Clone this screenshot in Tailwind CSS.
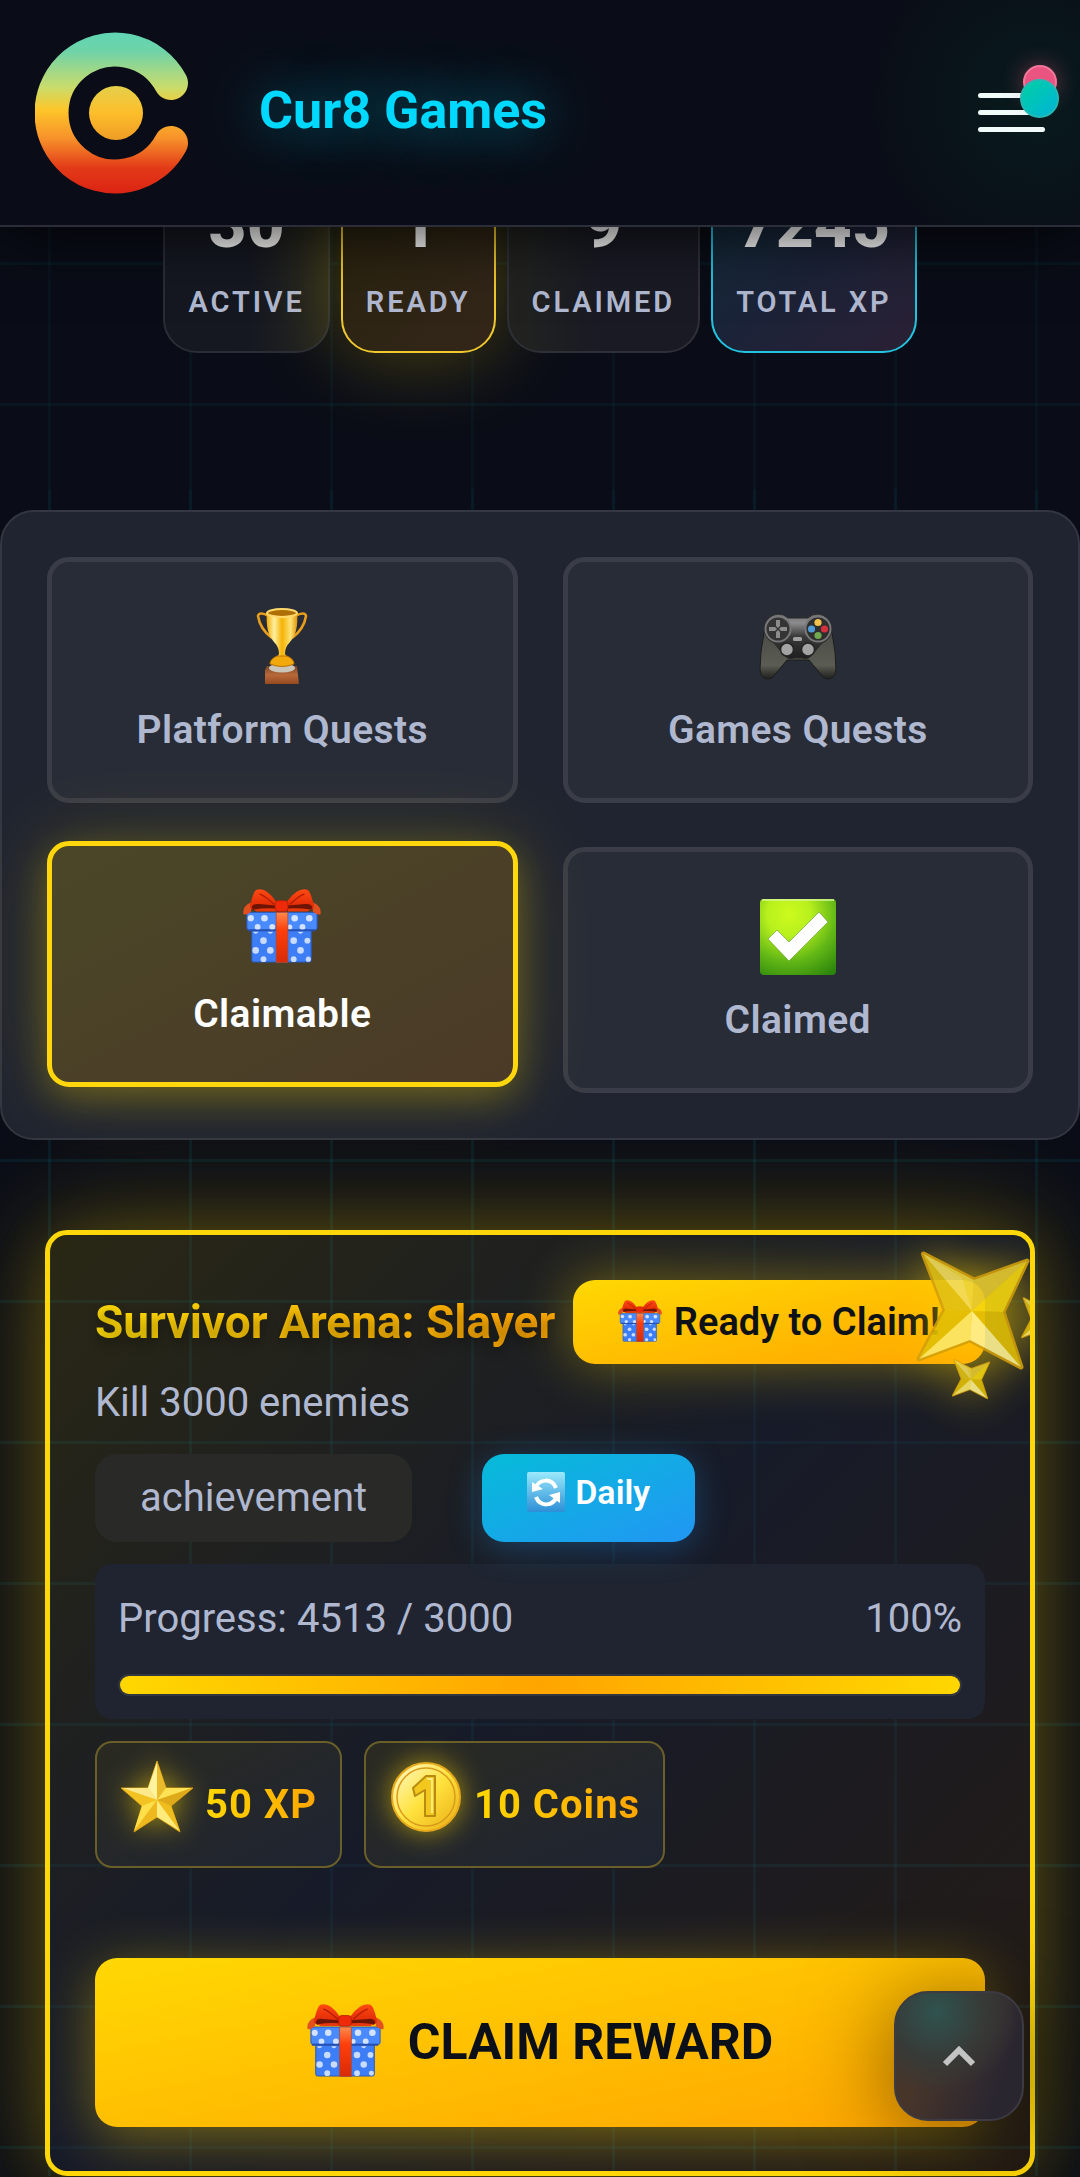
<!DOCTYPE html>
<html lang="en">

<head>
    <meta charset="UTF-8">
    <meta name="viewport" content="width=device-width, initial-scale=1.0">
    <title>Cur8 Games - Quests</title>
    <script src="https://cdn.jsdelivr.net/npm/@tailwindcss/browser@4"></script>
</head>

<body class="min-h-screen bg-[#0a0d17] text-[#b0b8d0] font-[Roboto,sans-serif]">

    <!-- shared icons -->
    <svg class="absolute w-0 h-0" aria-hidden="true">
        <defs>
            <linearGradient id="bow" x1="0" y1="0" x2="0" y2="1">
                <stop offset="0" stop-color="#ff4a12" />
                <stop offset="1" stop-color="#d92405" />
            </linearGradient>
            <linearGradient id="ribbon" x1="0" y1="0" x2="0" y2="1">
                <stop offset="0" stop-color="#ff8a4d" />
                <stop offset=".35" stop-color="#ff3f0c" />
                <stop offset="1" stop-color="#d82a06" />
            </linearGradient>
            <linearGradient id="goldLight" x1="0" y1="0" x2="1" y2="1">
                <stop offset="0" stop-color="#fffbd0" />
                <stop offset=".5" stop-color="#ffe23e" />
                <stop offset="1" stop-color="#e9ab12" />
            </linearGradient>
            <symbol id="gift" viewBox="0 0 80 76">
                <path d="M9 42h61v31q0 2-2 2H11q-2 0-2-2z" fill="#3d7df6" stroke="#2a57b8" />
                <g fill="#c9dbff">
                    <circle cx="21" cy="53" r="3.4" /><circle cx="13" cy="63" r="3.4" /><circle cx="28" cy="63" r="3.4" /><circle cx="21" cy="72" r="3" />
                    <circle cx="52" cy="53" r="3.4" /><circle cx="66" cy="53" r="3" /><circle cx="59" cy="63" r="3.4" /><circle cx="52" cy="72" r="3" /><circle cx="67" cy="72" r="2.6" />
                    <path d="M10 44h6q-3 4-6 0zM25 44h6q-3 4-6 0zM56 44h6q-3 4-6 0z" />
                </g>
                <path d="M4 24h72v16q0 2-2 2H6q-2 0-2-2z" fill="#4a8aff" stroke="#2a57b8" />
                <g fill="#d3e2ff">
                    <circle cx="8" cy="30" r="3.2" /><circle cx="22" cy="30" r="3.4" /><circle cx="15" cy="39" r="3" /><circle cx="30" cy="39" r="3" />
                    <circle cx="53" cy="30" r="3.4" /><circle cx="68" cy="30" r="3.4" /><circle cx="61" cy="39" r="3" /><circle cx="48" cy="39" r="2.6" />
                </g>
                <path d="M5 42.500h69" stroke="#2550b0" stroke-width="2" />
                <rect x="34" y="24" width="12" height="51.500" fill="url(#ribbon)" stroke="#a84b3a" stroke-width=".8" />
                <path d="M8 14Q-1 18 .5 26q4 1 8-3zM72 14q9 4 7.500 12-4 1-8-3z" fill="#e2501f" />
                <path d="M34 22H14Q5 22 8 14Q11 2 14 .8Q24-2 34 13zM45 22h21q9 0 6-8Q69 2 66 .8 56-2 45 13z" fill="url(#bow)" />
                <path d="M9 19q1-4 7-3.500L33 17v5q-18 1-23-1zM71 19q-1-4-7-3.500L46 17v5q18 1 24-1z" fill="#6d1405" />
                <path d="M11 21q12-2 23-1v3H14zM69 21q-12-2-23-1v3h20z" fill="#e8380d" />
                <path d="M17 5q7 3 15 11M63 5q-7 3-15 11" stroke="#b51d05" stroke-width="1.500" fill="none" />
                <rect x="33" y="12" width="13" height="11" rx="3" fill="#ee2a0a" stroke="#b41d05" stroke-width=".8" />
            </symbol>
            <symbol id="sparkle" viewBox="-4 -2 118 124">
                <g stroke-linejoin="round">
                    <path d="M5.500 4 56 30 109 11 85 62 103 117 52 90 1 109 27 60z" fill="#edca09" stroke="#d3a00c" stroke-width="5" />
                    <path d="M5.500 4 56 30 54 61z" fill="#eed53a" />
                    <path d="M5.500 4 27 60 54 61z" fill="#e2c114" />
                    <path d="M5.500 4 44 28 54 61z" fill="#f1dc5c" />
                    <path d="M56 30 109 11 54 61z" fill="#e6ca30" />
                    <path d="M109 11 85 62 54 61z" fill="#f5d70f" />
                    <path d="M85 62 103 117 54 61z" fill="#e2c006" />
                    <path d="M27 60 1 109 54 61z" fill="#e2c006" />
                    <path d="M1 109 52 90 54 61z" fill="#fbe96a" />
                    <path d="M103 117 52 90 54 61z" fill="#fff291" />
                </g>
            </symbol>
        </defs>
    </svg>

    <header class="fixed inset-x-0 top-0 z-20 flex h-[227px] items-center border-b-2 border-[#2b2d39] bg-[#0a0d17] bg-[radial-gradient(circle_at_96%_45%,#081b1d_0,transparent_170px)] px-[35px] shadow-[0_8px_60px_rgba(0,0,0,0.75)]">
        <a href="#" aria-label="Cur8" class="shrink-0">
            <svg width="162" height="162" viewBox="0 0 162 162" fill="none">
                <defs>
                    <linearGradient id="logo" x1="81" y1="0" x2="81" y2="162" gradientUnits="userSpaceOnUse">
                        <stop offset="0" stop-color="#5fd6b4" />
                        <stop offset=".12" stop-color="#6fd3a8" />
                        <stop offset=".34" stop-color="#c9dc6c" />
                        <stop offset=".48" stop-color="#fdc62a" />
                        <stop offset=".66" stop-color="#f7902a" />
                        <stop offset=".84" stop-color="#e23a18" />
                        <stop offset="1" stop-color="#db2313" />
                    </linearGradient>
                    <linearGradient id="dot" x1="0" y1="0" x2="0" y2="1">
                        <stop offset="0" stop-color="#e5cf4b" />
                        <stop offset=".5" stop-color="#fdbe2a" />
                        <stop offset="1" stop-color="#ee9c26" />
                    </linearGradient>
                </defs>
                <path d="M136 51A63.500 63.500 0 1 0 136 111" stroke="url(#logo)" stroke-width="34" stroke-linecap="round" />
                <circle cx="81" cy="81" r="27" fill="url(#dot)" />
            </svg>
        </a>
        <h1 class="mb-1 ml-[62px] text-[52px] font-bold text-[#00d9ff] [text-shadow:0_0_56px_rgba(0,217,255,0.6)]">Cur8 Games</h1>
        <button type="button" aria-label="Menu" class="relative ml-auto flex h-[68px] w-[67px] flex-col items-center justify-center gap-3">
            <span class="h-[5px] w-full rounded-full bg-[#f0fbfa]"></span>
            <span class="h-[5px] w-full rounded-full bg-[#f0fbfa]"></span>
            <span class="h-[5px] w-full rounded-full bg-[#f0fbfa]"></span>
            <span class="absolute -top-[14px] -right-[12px] size-[34px] rounded-full border-2 border-[#f0789a] bg-[#ea5480] shadow-[0_0_22px_rgba(234,84,128,0.45)]"></span>
            <span class="absolute top-0 -right-[14px] size-[39px] rounded-full border-2 border-[#25b9b6] bg-linear-to-br from-[#05d0a0] to-[#06b2d8]"></span>
        </button>
    </header>

    <main>
        <!-- stats -->
        <section class="h-[489px] bg-[linear-gradient(rgba(0,200,210,0.05)_3px,transparent_3px),linear-gradient(90deg,rgba(0,200,210,0.04)_3px,transparent_3px)] bg-[size:141px_141px] bg-[position:48px_121px] pt-[166px]">
            <div class="flex justify-center gap-[11px] text-center">
                <div class="rounded-[34px] border-2 border-[#2a2c36] bg-linear-to-r from-[#151821] from-50% to-[#22231f] px-[23px] pt-[22px] pb-[26px]">
                    <div class="mb-5 text-[66px] leading-[70px] font-extrabold text-white">30</div>
                    <div class="text-[29px] leading-[45px] font-semibold tracking-widest uppercase">Active</div>
                </div>
                <div class="rounded-[34px] border-2 border-[#f0c92e] bg-linear-to-br from-[#29230d] to-[#33261a] px-[23px] pt-[22px] pb-[26px] shadow-[0_0_84px_rgba(255,215,0,0.3)]">
                    <div class="mb-5 text-[66px] leading-[70px] font-extrabold text-white">1</div>
                    <div class="text-[29px] leading-[45px] font-semibold tracking-widest uppercase">Ready</div>
                </div>
                <div class="rounded-[34px] border-2 border-[#2f3037] bg-linear-to-r from-[#22231f] to-[#191a24] to-50% px-[23px] pt-[22px] pb-[26px]">
                    <div class="mb-5 text-[66px] leading-[70px] font-extrabold text-white">9</div>
                    <div class="text-[29px] leading-[45px] font-semibold tracking-widest uppercase">Claimed</div>
                </div>
                <div class="rounded-[34px] border-2 border-[#22c4e0] bg-linear-to-br from-[#0d2d3b] via-[#1b2338] to-[#2a2035] px-[23px] pt-[22px] pb-[26px]">
                    <div class="mb-5 text-[66px] leading-[70px] font-extrabold text-white">7245</div>
                    <div class="text-[29px] leading-[45px] font-semibold tracking-widest uppercase">Total XP</div>
                </div>
            </div>
        </section>

        <section class="bg-[linear-gradient(rgba(0,190,220,0.08)_3px,transparent_3px),linear-gradient(90deg,rgba(0,190,220,0.08)_3px,transparent_3px)] bg-[size:141px_141px] bg-[position:48px_106px] pt-[21px]">

            <!-- tabs -->
            <nav class="relative z-10 grid grid-cols-2 gap-x-[45px] gap-y-[44px] rounded-[34px] border-2 border-[#343741] bg-[#1f2430] p-[45px] text-[39px] leading-[52px] font-semibold tracking-[0.01em]">
                <button type="button" class="flex flex-col items-center gap-[18px] rounded-[22px] border-5 border-[#3a3d47] bg-[#272c37] pt-[46px] pb-[42px]">
                    <svg width="78" height="78" viewBox="0 0 78 78">
                        <defs>
                            <linearGradient id="cup" x1="0" y1="0" x2="1" y2="0">
                                <stop offset="0" stop-color="#f3ae05" />
                                <stop offset=".25" stop-color="#fff0a0" />
                                <stop offset=".5" stop-color="#f5b306" />
                                <stop offset=".78" stop-color="#ffe274" />
                                <stop offset="1" stop-color="#e39407" />
                            </linearGradient>
                            <linearGradient id="base" x1="0" y1="0" x2="0" y2="1">
                                <stop offset="0" stop-color="#7a4526" />
                                <stop offset=".5" stop-color="#b8693a" />
                                <stop offset="1" stop-color="#94491f" />
                            </linearGradient>
                        </defs>
                        <path d="M24 58h30l2 18H22V62z" fill="url(#base)" />
                        <ellipse cx="39" cy="60" rx="13" ry="4.500" fill="#c9c5b8" />
                        <path d="M26 8q-10-5-11 0 2 13 14 22M52 8q10-5 11 0-2 13-14 22" fill="none" stroke="#e99d1c" stroke-width="2.600" />
                        <path d="M24 4h30q2 20-7 30-5 5-5 12l2 3H34l2-3q0-7-5-12-9-10-7-30z" fill="url(#cup)" />
                        <path d="M34 48h10q7 3 7 8-12 5-24 0 0-5 7-8z" fill="#f2a90b" stroke="#b97205" />
                        <ellipse cx="39" cy="5" rx="15" ry="4" fill="#b06f05" stroke="#ffd96b" stroke-width="2" />
                    </svg>
                    <span>Platform Quests</span>
                </button>
                <button type="button" class="flex flex-col items-center gap-[18px] rounded-[22px] border-5 border-[#3a3d47] bg-[#272c37] pt-[46px] pb-[42px]">
                    <svg width="78" height="78" viewBox="0 1 78 78">
                        <defs>
                            <linearGradient id="pad" x1="0" y1="0" x2="0" y2="1">
                                <stop offset="0" stop-color="#6e6e6e" />
                                <stop offset=".2" stop-color="#8d8d8f" />
                                <stop offset=".5" stop-color="#3a3a3a" />
                                <stop offset="1" stop-color="#1e1e1e" />
                            </linearGradient>
                            <linearGradient id="grip" x1="0" y1="0" x2="0" y2="1">
                                <stop offset="0" stop-color="#4b4c46" />
                                <stop offset=".7" stop-color="#5b5c53" />
                                <stop offset="1" stop-color="#1f1f1d" />
                            </linearGradient>
                        </defs>
                        <path d="M5 26Q1 45 1 63q2 12 12 8l15-18h22l15 18q10 4 12-8 0-18-4-37z" fill="url(#grip)" stroke="#1c1c1a" />
                        <path d="M19 7q6 0 10 4h20q4-4 10-4a15 15 0 0 1 4 29L53 48q-4 5-10 3h-8q-6 2-10-3L15 36A15 15 0 0 1 19 7z" fill="url(#pad)" stroke="#2a2a2a" />
                        <circle cx="19" cy="22" r="12.500" fill="#343434" stroke="#77777a" stroke-width="2" />
                        <circle cx="59" cy="22" r="12.500" fill="#2e2e2e" stroke="#77777a" stroke-width="2" />
                        <path d="M17 13h4v6l-2 2-2-2zM17 31h4v-6l-2-2-2 2zM10 20h6l2 2-2 2h-6zM28 20h-6l-2 2 2 2h6z" fill="#8b8b8b" />
                        <circle cx="59" cy="15.500" r="3.600" fill="#f3bf4d" />
                        <circle cx="59" cy="28.500" r="3.600" fill="#6fa84f" />
                        <circle cx="52.500" cy="22" r="3.600" fill="#4f9bd8" />
                        <circle cx="65.500" cy="22" r="3.600" fill="#d5303e" />
                        <rect x="34" y="30" width="9" height="4" rx="1.500" fill="#a0a0a0" />
                        <circle cx="28" cy="42.500" r="6.500" fill="#a3a3a3" stroke="#242424" stroke-width="1.500" />
                        <circle cx="49" cy="42.500" r="6.500" fill="#a3a3a3" stroke="#242424" stroke-width="1.500" />
                    </svg>
                    <span>Games Quests</span>
                </button>
                <button type="button" class="flex -translate-y-[6px] flex-col items-center gap-[18px] rounded-[22px] border-5 border-[#ffd70c] bg-linear-to-br from-[#4a4727] to-[#4b3a27] pt-[46px] pb-[42px] text-white shadow-[0_0_84px_rgba(255,215,0,0.2),0_11px_34px_rgba(255,215,0,0.25)]">
                    <svg class="overflow-visible" width="78" height="78"><use href="#gift" y="-4" width="78" height="76" /></svg>
                    <span>Claimable</span>
                </button>
                <button type="button" class="flex flex-col items-center gap-[18px] rounded-[22px] border-5 border-[#3a3d47] bg-[#272c37] pt-[46px] pb-[42px]">
                    <svg width="78" height="78" viewBox="0 0 78 78">
                        <defs>
                            <radialGradient id="green" cx=".38" cy=".2" r=".95">
                                <stop offset="0" stop-color="#cdfb1e" />
                                <stop offset=".3" stop-color="#b8f01d" />
                                <stop offset=".65" stop-color="#63b816" />
                                <stop offset="1" stop-color="#2c850b" />
                            </radialGradient>
                        </defs>
                        <rect x="1" y="1" width="76" height="76" rx="4" fill="url(#green)" />
                        <path d="M3 2h72" stroke="#d8f79a" stroke-width="1.500" />
                        <path d="m9 41 9-9 12 12 30-30 9 10-39 39z" fill="#fff" stroke="#4a8a1a" stroke-opacity=".5" />
                    </svg>
                    <span>Claimed</span>
                </button>
            </nav>

            <!-- quest card -->
            <article class="relative mx-[45px] mt-[90px] rounded-[22px] border-5 border-[#ffd70a] bg-[linear-gradient(135deg,rgba(255,215,0,0.13),rgba(38,44,62,0.45)_48%,rgba(255,150,0,0.11))] px-[45px] pt-[45px] pb-11 shadow-[0_0_112px_rgba(255,215,0,0.32),0_0_56px_rgba(255,215,0,0.1)]">
                <div class="flex items-center justify-between">
                    <h2 class="bg-linear-to-r from-[#ffdc05] to-[#ffa500] bg-clip-text text-[46px] leading-[60px] font-bold whitespace-nowrap text-transparent [text-shadow:0_6px_11px_rgba(0,0,0,0.3)]">Survivor Arena: Slayer</h2>
                    <span class="flex h-[84px] items-center gap-3 rounded-[22px] bg-linear-to-br from-[#ffd803] to-[#ffa500] px-[45px] text-[38px] font-semibold whitespace-nowrap text-[#0e1116] shadow-[0_0_56px_rgba(255,215,0,0.4)]">
                        <svg width="44" height="44"><use href="#gift" width="44" height="42" /></svg>
                        Ready to Claim!
                    </span>
                </div>
                <p class="mt-[11px] text-[40px] leading-[56px]">Kill 3000 enemies</p>

                <div class="mt-[23px] flex gap-[70px]">
                    <span class="rounded-[22px] bg-[#292927] px-[45px] text-[40px] leading-[88px]">achievement</span>
                    <span class="flex h-[88px] items-center gap-[10px] rounded-[22px] bg-linear-to-br from-[#06bbd8] to-[#2196f3] px-[45px] pb-3 text-[34px] font-semibold text-white shadow-[0_6px_34px_rgba(33,150,243,0.3)]">
                        <svg width="38" height="40" viewBox="0 0 38 40" fill="none">
                            <defs>
                                <linearGradient id="sync" x1="0" y1="0" x2="0" y2="1">
                                    <stop offset="0" stop-color="#9be9fb" />
                                    <stop offset="1" stop-color="#2d8fd6" />
                                </linearGradient>
                            </defs>
                            <rect width="38" height="40" rx="2" fill="url(#sync)" />
                            <path d="M8 17C12 6 25 6 29 16" stroke="#fff" stroke-width="4" />
                            <path d="M30 24C26 35 13 35 9 25" stroke="#fff" stroke-width="4" />
                            <path d="M5 10v10l11-3zM33 20v11l-11-8z" fill="#fff" />
                        </svg>
                        Daily
                    </span>
                </div>

                <div class="mt-[22px] rounded-[17px] bg-[#1f2430] p-[23px]">
                    <div class="flex justify-between text-[40px] leading-[64px]">
                        <span>Progress: 4513 / 3000</span>
                        <span>100%</span>
                    </div>
                    <div role="progressbar" aria-label="Quest progress" aria-valuenow="100" class="mt-[23px] h-[22px] rounded-full border-2 border-[#33363f]">
                        <div class="h-full rounded-full bg-linear-to-r from-[#ffd700] via-[#ffa500] to-[#ffd700]" style="width: 100%"></div>
                    </div>
                </div>

                <div class="mt-[22px] flex gap-[22px] text-[40px] font-bold tracking-wide">
                    <div class="flex h-[127px] items-center gap-[11px] rounded-[17px] border-2 border-[#6a5f29] bg-linear-to-br from-[#2a2a21] to-[#1f2432] px-[23px]">
                        <svg class="-mt-4 drop-shadow-[0_0_14px_rgba(255,215,0,0.6)]" width="74" height="72" viewBox="0 0 74 72">
                            <path d="M37 0 46 27 73 27 51 45 60 71 37 56 14 71 22 45 1 27 28 27z" fill="#f4c521" stroke="#d29a12" />
                            <path d="M37 1v38L28 27z" fill="#fff3a0" />
                            <path d="M37 1v38l9-12z" fill="#e9bb2a" />
                            <path d="M2 27h26l9 12z" fill="#fbe98c" />
                            <path d="M2 27 22 45l15-6z" fill="#f2c323" />
                            <path d="M72 27H46l-9 12z" fill="#ffe256" />
                            <path d="M72 27 51 45l-14-6z" fill="#deaa1a" />
                            <path d="M14 70 37 39 22 45z" fill="#ffdf4a" />
                            <path d="M14 70 37 56V39z" fill="#edb91f" />
                            <path d="M60 70 37 56V39z" fill="#ffeb7c" />
                            <path d="M60 70 37 39l14 6z" fill="#f0bd1e" />
                        </svg>
                        <span class="bg-linear-to-r from-[#ffd700] to-[#ffa500] bg-clip-text text-transparent">50 XP</span>
                    </div>
                    <div class="flex h-[127px] items-center gap-[11px] rounded-[17px] border-2 border-[#6a5f29] bg-linear-to-br from-[#2a2a21] to-[#1f2432] px-[23px]">
                        <svg class="-mt-4 drop-shadow-[0_0_14px_rgba(255,215,0,0.6)]" width="74" height="72" viewBox="0 0 74 72">
                            <circle cx="37" cy="36" r="34" fill="url(#goldLight)" stroke="#e7a91d" stroke-width="2" />
                            <circle cx="37" cy="36" r="29" fill="none" stroke="#d99b1c" stroke-width="1.500" />
                            <path d="M37 15h9v40H36V29l-10 6-2-8z" fill="#f2c81f" stroke="#b98a10" stroke-width="2" stroke-linejoin="round" />
                            <path d="M38 18h5v34" stroke="#fff3a0" stroke-width="1.500" fill="none" />
                        </svg>
                        <span class="bg-linear-to-r from-[#ffd700] to-[#ffa500] bg-clip-text text-transparent">10 Coins</span>
                    </div>
                </div>

                <button type="button" class="mt-[90px] flex h-[169px] w-full items-center justify-center gap-6 rounded-[22px] bg-linear-to-br from-[#ffd803] to-[#ffa500] text-[50px] font-bold text-[#0b0f17] uppercase shadow-[0_11px_56px_rgba(255,215,0,0.4)]">
                    <svg class="overflow-visible" width="77" height="74"><use href="#gift" y="-2" width="77" height="73" /></svg>
                    Claim Reward
                </button>

                <!-- sparkles over the badge, cut off by the card edge -->
                <div class="pointer-events-none absolute inset-0 overflow-hidden rounded-[17px] opacity-90" aria-hidden="true">
                    <svg class="absolute top-[13px] right-0 overflow-visible drop-shadow-[0_0_22px_rgba(255,215,0,0.6)]" width="114" height="150" viewBox="0 0 114 150">
                        <use href="#sparkle" x="-2" width="118" height="124" />
                        <use href="#sparkle" x="34" y="110" width="42" height="42" />
                        <use href="#sparkle" x="104" y="46" width="44" height="50" />
                    </svg>
                </div>
            </article>
        </section>
    </main>

    <button type="button" aria-label="Back to top" class="fixed right-[56px] bottom-[56px] z-30 flex size-[130px] items-center justify-center rounded-[34px] border-2 border-[#3c3a42] bg-[#2e2627] bg-[radial-gradient(circle_at_32%_15%,#30534f_0,#373a37_35%,transparent_60%),linear-gradient(110deg,#47352a_30%,#2a2630_80%)] shadow-[0_11px_90px_rgba(0,0,0,0.5)]">
        <svg width="34" height="22" viewBox="0 0 34 22" fill="none" stroke="#c3c3c3" stroke-width="6">
            <path d="m3 19 14-14 14 14" />
        </svg>
    </button>

</body>

</html>
